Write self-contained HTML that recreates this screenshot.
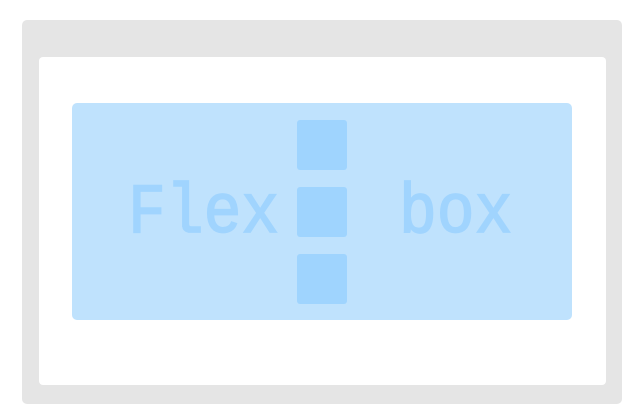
<!DOCTYPE html>
<html><head><style>
html,body{margin:0;padding:0;background:#fff;width:640px;height:418px;overflow:hidden;position:relative}
div{position:absolute;box-sizing:border-box}
.o{left:22px;top:20px;width:600px;height:384px;background:#e5e5e5;border-radius:5px}
.i{left:39px;top:57px;width:567px;height:328px;background:#fff;border-radius:4px}
.b{left:72px;top:103px;width:500px;height:217px;background:#bfe2fd;border-radius:5px}
.s{left:297px;width:50px;height:50px;background:#9fd4fe;border-radius:3px}
.t{font-family:"Liberation Mono",monospace;font-weight:normal;font-size:63px;color:#a0d4fe;line-height:1;top:178px;transform:scaleY(1.12);transform-origin:0 0;-webkit-text-stroke:1.5px #a0d4fe}
</style></head><body>
<div class="o"></div><div class="i"></div><div class="b"></div>
<div class="t" style="left:128px">Flex</div>
<div class="t" style="left:399px">box</div>
<div class="s" style="top:120px"></div>
<div class="s" style="top:187px"></div>
<div class="s" style="top:254px"></div>
</body></html>
